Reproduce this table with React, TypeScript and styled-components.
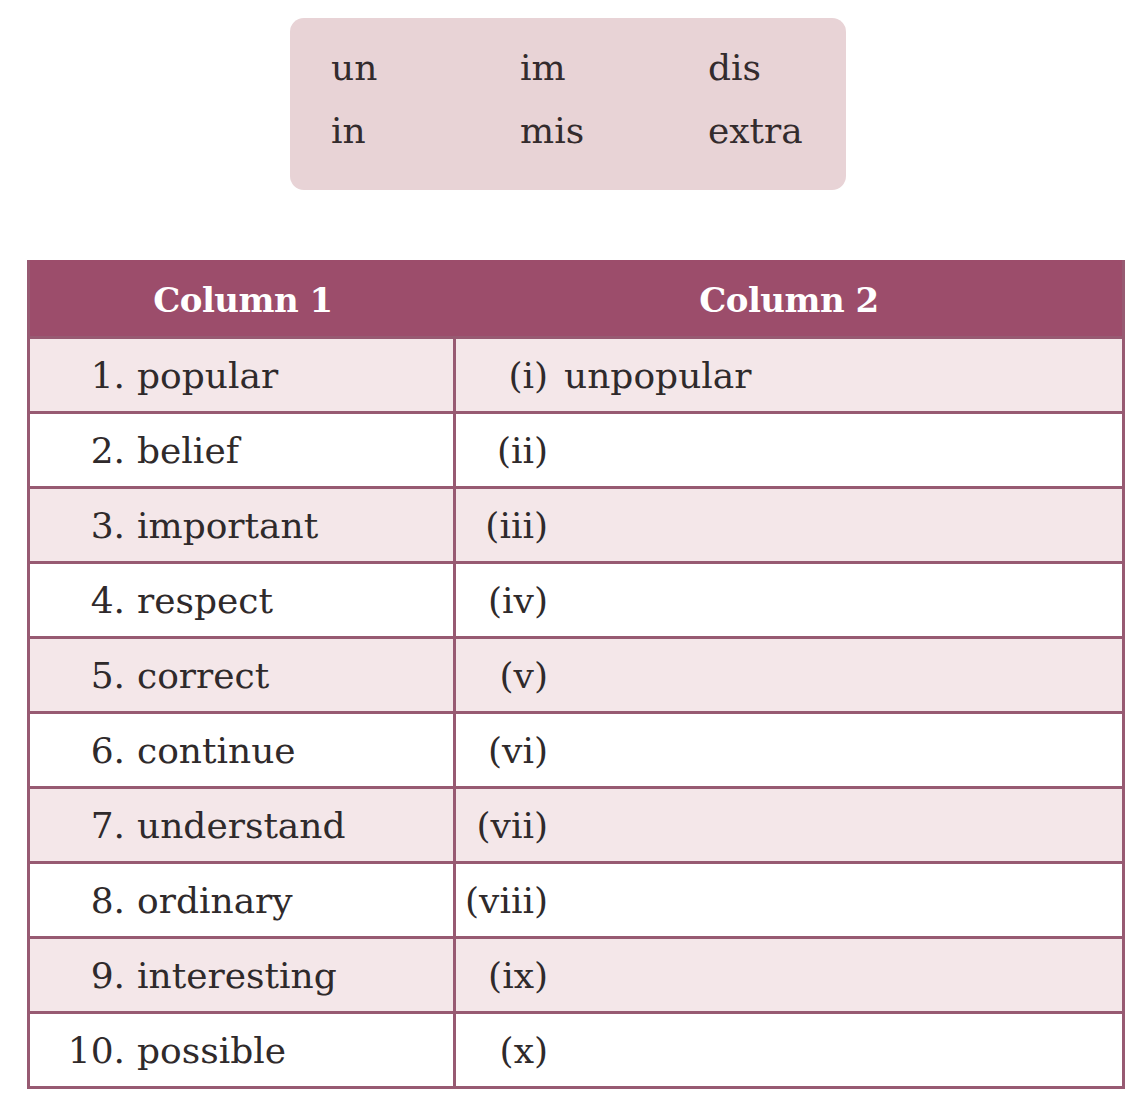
import React from "react";
import styled, { createGlobalStyle } from "styled-components";

const GlobalStyle = createGlobalStyle`
  html, body {
    margin: 0;
    padding: 0;
    background: #ffffff;
  }
  body {
    font-family: "DejaVu Serif", "Liberation Serif", serif;
    color: #2f2a2b;
  }
`;

const Page = styled.div`
  width: 1148px;
  height: 1102px;
  display: flex;
  flex-direction: column;
  align-items: flex-start;
  padding: 18px 0 0 27px;
  box-sizing: border-box;
`;

const PrefixBox = styled.div`
  margin-left: 263px;
  width: 556px;
  height: 172px;
  box-sizing: border-box;
  background: #e8d3d6;
  border-radius: 14px;
  padding: 26px 0 0 41px;
  display: grid;
  grid-template-columns: 189px 188px 150px;
  grid-auto-rows: 63px;
  align-content: start;
`;

const Prefix = styled.span`
  font-size: 36px;
  line-height: 48px;
  color: #332b2d;
`;

const Table = styled.div`
  margin-top: 70px;
  width: 1098px;
  box-sizing: border-box;
  border: 3px solid #975a72;
  border-top: none;
  display: grid;
  grid-template-columns: 426px 1fr;
`;

const HeadCell = styled.div`
  height: 76px;
  background: #9c4d6b;
  color: #ffffff;
  font-weight: bold;
  font-size: 34px;
  letter-spacing: -0.5px;
  display: flex;
  align-items: center;
  justify-content: center;
  padding-top: 4px;
  box-sizing: border-box;
`;

const Cell = styled.div<{ $shade: boolean; $divider?: boolean }>`
  height: 75px;
  box-sizing: border-box;
  background: ${({ $shade }) => ($shade ? "#f4e7e9" : "#ffffff")};
  border-top: 3px solid #975a72;
  border-right: ${({ $divider }) => ($divider ? "3px solid #975a72" : "none")};
  display: flex;
  align-items: center;
  padding-top: 1px;
  font-size: 36px;
  color: #2f2a2b;
`;

const Num = styled.span`
  width: 95px;
  text-align: right;
  flex-shrink: 0;
`;

const Word = styled.span<{ $gap?: number }>`
  margin-left: ${({ $gap }) => $gap ?? 12}px;
`;

const Roman = styled.span`
  width: 92px;
  text-align: right;
  flex-shrink: 0;
`;

const rows = [
  { n: "1.", w: "popular", r: "(i)", a: "unpopular" },
  { n: "2.", w: "belief", r: "(ii)", a: "" },
  { n: "3.", w: "important", r: "(iii)", a: "" },
  { n: "4.", w: "respect", r: "(iv)", a: "" },
  { n: "5.", w: "correct", r: "(v)", a: "" },
  { n: "6.", w: "continue", r: "(vi)", a: "" },
  { n: "7.", w: "understand", r: "(vii)", a: "" },
  { n: "8.", w: "ordinary", r: "(viii)", a: "" },
  { n: "9.", w: "interesting", r: "(ix)", a: "" },
  { n: "10.", w: "possible", r: "(x)", a: "" },
];

const prefixes = ["un", "im", "dis", "in", "mis", "extra"];

export default function App() {
  return (
    <>
      <GlobalStyle />
      <Page>
        <PrefixBox>
          {prefixes.map((p) => (
            <Prefix key={p}>{p}</Prefix>
          ))}
        </PrefixBox>
        <Table>
          <HeadCell>Column 1</HeadCell>
          <HeadCell>Column 2</HeadCell>
          {rows.map((row, i) => (
            <React.Fragment key={row.n}>
              <Cell $shade={i % 2 === 0} $divider>
                <Num>{row.n}</Num>
                <Word>{row.w}</Word>
              </Cell>
              <Cell $shade={i % 2 === 0}>
                <Roman>{row.r}</Roman>
                {row.a && <Word $gap={16}>{row.a}</Word>}
              </Cell>
            </React.Fragment>
          ))}
        </Table>
      </Page>
    </>
  );
}
